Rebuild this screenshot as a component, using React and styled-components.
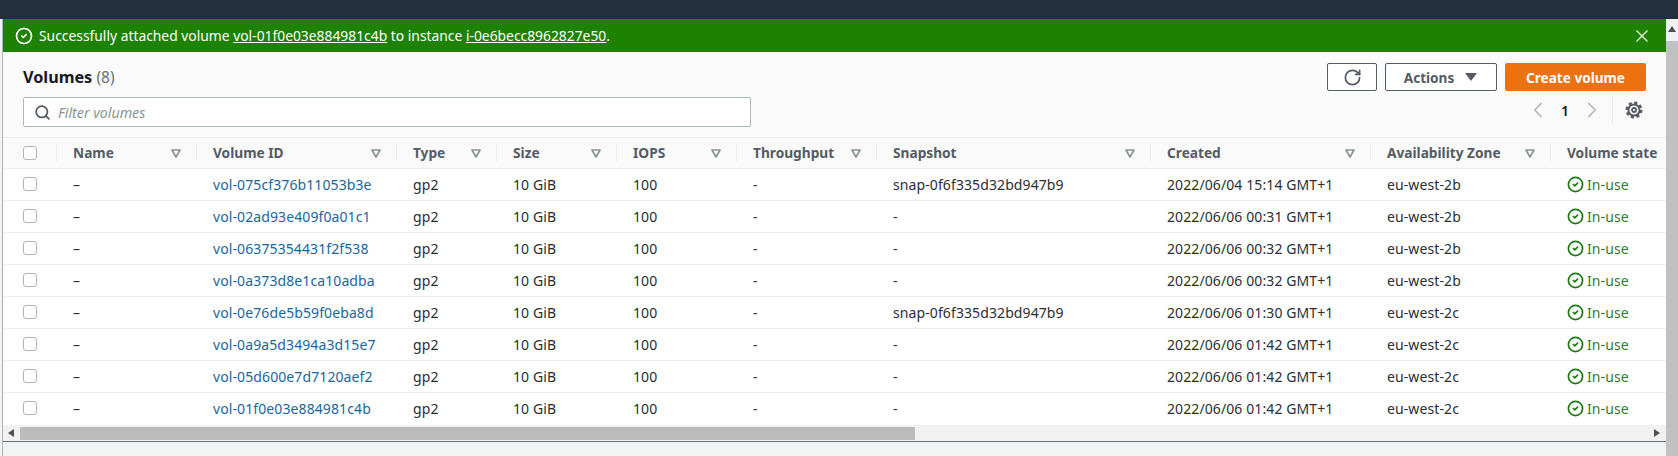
import React from "react";
import styled, { createGlobalStyle } from "styled-components";
import { CircleCheck, Search, X, RotateCw, ChevronLeft, ChevronRight } from "lucide-react";

const GlobalStyle = createGlobalStyle`
  html, body {
    margin: 0;
    height: 456px;
    overflow: hidden;
    font-family: "Noto Sans", "Open Sans", Arial, sans-serif;
    font-size: 14px;
    color: #16191f;
  }
  * { box-sizing: border-box; }
`;

const Page = styled.div`
  display: flex;
  flex-direction: column;
  width: 1678px;
  height: 456px;
`;

const TopBar = styled.div`
  background: #232f3e;
  height: 19px;
  flex: none;
`;

const Main = styled.div`
  display: flex;
  flex: 1;
  min-height: 0;
`;

const LeftEdge = styled.div`
  width: 3px;
  flex: none;
  background: #f2f3f3;
  border-right: 1px solid #aab7b8;
`;

const Content = styled.div`
  flex: 1;
  min-width: 0;
  display: flex;
  flex-direction: column;
  background: #f2f3f3;
`;

const Flash = styled.div`
  background: #1d8102;
  color: #fff;
  height: 33px;
  flex: none;
  display: flex;
  align-items: center;
  gap: 6px;
  padding: 0 14px 0 12px;
  a {
    color: #fff;
    text-decoration: underline;
  }
`;

const FlashText = styled.span`
  flex: 1;
  font-size: 13.85px;
`;

const Header = styled.div`
  background: #fafafa;
  border-bottom: 1px solid #eaeded;
  display: flex;
  justify-content: space-between;
  padding: 11px 20px 10px;
  height: 86px;
  flex: none;
`;

const HeaderLeft = styled.div`
  display: flex;
  flex-direction: column;
  gap: 6px;
`;

const Title = styled.h2`
  margin: 0;
  font-size: 16.2px;
  line-height: 28px;
  font-weight: 700;
  span {
    font-weight: 400;
    font-size: 15.5px;
    color: #687078;
  }
`;

const SearchBox = styled.div`
  width: 728px;
  height: 30px;
  display: flex;
  align-items: center;
  gap: 7px;
  padding: 0 10px;
  background: #fff;
  border: 1px solid #aab7b8;
  border-radius: 2px;
  color: #545b64;
  font-size: 14.2px;
  font-style: italic;
  span {
    color: #879596;
  }
`;

const HeaderRight = styled.div`
  display: flex;
  flex-direction: column;
  align-items: flex-end;
  gap: 5px;
`;

const Buttons = styled.div`
  display: flex;
  gap: 8px;
`;

const Button = styled.button`
  height: 28px;
  width: ${({ $width }) => $width}px;
  display: flex;
  align-items: center;
  justify-content: center;
  gap: 10px;
  padding: 0;
  font: 700 13.6px "Noto Sans", sans-serif;
  color: ${({ $primary }) => ($primary ? "#fff" : "#545b64")};
  background: ${({ $primary }) => ($primary ? "#ec7211" : "#fff")};
  border: 1px solid ${({ $primary }) => ($primary ? "#ec7211" : "#545b64")};
  border-radius: 2px;
`;

const Pager = styled.div`
  display: flex;
  align-items: center;
  height: 28px;
  color: #aab7b8;
  padding-right: 3px;
`;

const PageNumber = styled.span`
  font-weight: 600;
  color: #16191f;
  width: 28px;
  text-align: center;
`;

const PagerDivider = styled.div`
  width: 1px;
  height: 28px;
  background: #eaeded;
  margin: 0 12px 0 7px;
`;

const TableWrap = styled.div`
  height: 287px;
  flex: none;
  overflow: hidden;
  background: #fff;
`;

const Table = styled.table`
  table-layout: fixed;
  border-collapse: collapse;
  width: 1700px;
`;

const HeadCell = styled.th`
  height: 30px;
  padding: 0;
  text-align: left;
  background: #fafafa;
  border-bottom: 1px solid #eaeded;
`;

const HeadInner = styled.div`
  display: flex;
  align-items: center;
  justify-content: space-between;
  height: 17px;
  padding: 0 14px 0 16px;
  border-right: 1px solid ${({ $noLine }) => ($noLine ? "transparent" : "#eaeded")};
  font-size: 13.7px;
  font-weight: 700;
  color: #545b64;
  white-space: nowrap;
`;

const CheckCell = styled.div`
  display: flex;
  align-items: center;
  height: 17px;
  padding-left: 20px;
  border-right: 1px solid ${({ $line }) => ($line ? "#eaeded" : "transparent")};
`;

const Checkbox = styled.span`
  display: block;
  width: 14px;
  height: 14px;
  background: #fff;
  border: 1px solid #aab7b8;
  border-radius: 3px;
`;

const Row = styled.tr`
  height: 32px;
  border-bottom: 1px solid #eaeded;
  &:last-child {
    border-bottom: none;
  }
`;

const Cell = styled.td`
  padding: 0 0 0 16px;
  font-size: 14px;
  letter-spacing: 0.1px;
  white-space: nowrap;
  color: #2a2e35;
`;

const BoxCell = styled.td`
  padding: 0;
`;

const VolumeLink = styled.a`
  color: #1b659d;
`;

const Status = styled.span`
  display: flex;
  align-items: center;
  gap: 3px;
  color: #2f7d2c;
  svg {
    color: #1d7a12;
  }
`;

const HScroll = styled.div`
  height: 17px;
  flex: none;
  display: flex;
  align-items: center;
  background: #f1f1f1;
  border-bottom: 1px solid #687078;
`;

const Thumb = styled.div`
  background: #bcbcbc;
  height: 13px;
  width: 895px;
`;

const ArrowSlot = styled.div`
  width: 17px;
  display: flex;
  justify-content: center;
`;

const ScrollSpacer = styled.div`
  flex: 1;
`;

const Footer = styled.div`
  flex: 1;
  background: #f2f3f3;
`;

const VScroll = styled.div`
  width: 12px;
  flex: none;
  display: flex;
  flex-direction: column;
  background: #f1f1f1;
`;

const VArrow = styled.div`
  height: 22px;
  flex: none;
  display: flex;
  justify-content: center;
  align-items: center;
`;

const VThumb = styled.div`
  flex: 1;
  background: #c1c1c1;
`;

const Tri = ({ dir }) => {
  const points = {
    up: "0,6 4,0 8,6",
    left: "6,0 6,8 0,4",
    right: "0,0 0,8 6,4",
  }[dir];
  return (
    <svg width="8" height="8" viewBox="0 0 8 8">
      <polygon points={points} fill="#505050" />
    </svg>
  );
};

const SortIcon = () => (
  <svg width="12" height="12" viewBox="0 0 12 12" style={{ flex: "none" }}>
    <path d="M2 3h8L6 10z" fill="none" stroke="#879596" strokeWidth="1.7" strokeLinejoin="round" />
  </svg>
);

const CaretDown = () => (
  <svg width="14" height="10" viewBox="0 0 14 10">
    <path d="M1 1h12L7 9z" fill="#545b64" />
  </svg>
);

const GearIcon = () => (
  <svg width="18" height="18" viewBox="0 0 18 18" fill="none" stroke="#545b64">
    <circle cx="9" cy="9" r="5.6" strokeWidth="2" />
    <circle cx="9" cy="9" r="7.3" strokeWidth="2.4" strokeDasharray="3.2 2.53" />
    <circle cx="9" cy="9" r="2" strokeWidth="1.8" />
  </svg>
);

const columns = [
  { title: "Name", width: 140 },
  { title: "Volume ID", width: 200 },
  { title: "Type", width: 100 },
  { title: "Size", width: 120 },
  { title: "IOPS", width: 120 },
  { title: "Throughput", width: 140 },
  { title: "Snapshot", width: 274 },
  { title: "Created", width: 220 },
  { title: "Availability Zone", width: 180 },
  { title: "Volume state", width: 152, plain: true },
];

const snap = "snap-0f6f335d32bd947b9";

const volumes = [
  ["vol-075cf376b11053b3e", snap, "2022/06/04 15:14 GMT+1", "eu-west-2b"],
  ["vol-02ad93e409f0a01c1", "-", "2022/06/06 00:31 GMT+1", "eu-west-2b"],
  ["vol-06375354431f2f538", "-", "2022/06/06 00:32 GMT+1", "eu-west-2b"],
  ["vol-0a373d8e1ca10adba", "-", "2022/06/06 00:32 GMT+1", "eu-west-2b"],
  ["vol-0e76de5b59f0eba8d", snap, "2022/06/06 01:30 GMT+1", "eu-west-2c"],
  ["vol-0a9a5d3494a3d15e7", "-", "2022/06/06 01:42 GMT+1", "eu-west-2c"],
  ["vol-05d600e7d7120aef2", "-", "2022/06/06 01:42 GMT+1", "eu-west-2c"],
  ["vol-01f0e03e884981c4b", "-", "2022/06/06 01:42 GMT+1", "eu-west-2c"],
];

const App = () => (
  <Page>
    <GlobalStyle />
    <TopBar />
    <Main>
      <LeftEdge />
      <Content>
        <Flash>
          <CircleCheck size={18} strokeWidth={2.2} />
          <FlashText>
            Successfully attached volume <a href="#v">vol-01f0e03e884981c4b</a> to instance{" "}
            <a href="#i">i-0e6becc8962827e50</a>.
          </FlashText>
          <X size={20} strokeWidth={2} color="#d5e8cf" />
        </Flash>
        <Header>
          <HeaderLeft>
            <Title>
              Volumes <span>(8)</span>
            </Title>
            <SearchBox>
              <Search size={17} strokeWidth={2.5} />
              <span>Filter volumes</span>
            </SearchBox>
          </HeaderLeft>
          <HeaderRight>
            <Buttons>
              <Button $width={50}>
                <RotateCw size={19} strokeWidth={2.2} />
              </Button>
              <Button $width={112}>
                Actions <CaretDown />
              </Button>
              <Button $width={141} $primary>
                Create volume
              </Button>
            </Buttons>
            <Pager>
              <ChevronLeft size={26} strokeWidth={1.5} />
              <PageNumber>1</PageNumber>
              <ChevronRight size={26} strokeWidth={1.5} />
              <PagerDivider />
              <GearIcon />
            </Pager>
          </HeaderRight>
        </Header>
        <TableWrap>
          <Table>
            <colgroup>
              <col style={{ width: 54 }} />
              {columns.map((c) => (
                <col key={c.title} style={{ width: c.width }} />
              ))}
            </colgroup>
            <thead>
              <tr>
                <HeadCell>
                  <CheckCell $line>
                    <Checkbox />
                  </CheckCell>
                </HeadCell>
                {columns.map((c) => (
                  <HeadCell key={c.title}>
                    <HeadInner $noLine={c.plain}>
                      {c.title}
                      {!c.plain && <SortIcon />}
                    </HeadInner>
                  </HeadCell>
                ))}
              </tr>
            </thead>
            <tbody>
              {volumes.map(([id, snapshot, created, zone]) => (
                <Row key={id}>
                  <BoxCell>
                    <CheckCell>
                      <Checkbox />
                    </CheckCell>
                  </BoxCell>
                  <Cell>–</Cell>
                  <Cell>
                    <VolumeLink>{id}</VolumeLink>
                  </Cell>
                  <Cell>gp2</Cell>
                  <Cell>10 GiB</Cell>
                  <Cell>100</Cell>
                  <Cell>-</Cell>
                  <Cell>{snapshot}</Cell>
                  <Cell>{created}</Cell>
                  <Cell>{zone}</Cell>
                  <Cell>
                    <Status>
                      <CircleCheck size={17} strokeWidth={2.4} />
                      In-use
                    </Status>
                  </Cell>
                </Row>
              ))}
            </tbody>
          </Table>
        </TableWrap>
        <HScroll>
          <ArrowSlot>
            <Tri dir="left" />
          </ArrowSlot>
          <Thumb />
          <ScrollSpacer />
          <ArrowSlot>
            <Tri dir="right" />
          </ArrowSlot>
        </HScroll>
        <Footer />
      </Content>
      <VScroll>
        <VArrow>
          <Tri dir="up" />
        </VArrow>
        <VThumb />
      </VScroll>
    </Main>
  </Page>
);

export default App;
